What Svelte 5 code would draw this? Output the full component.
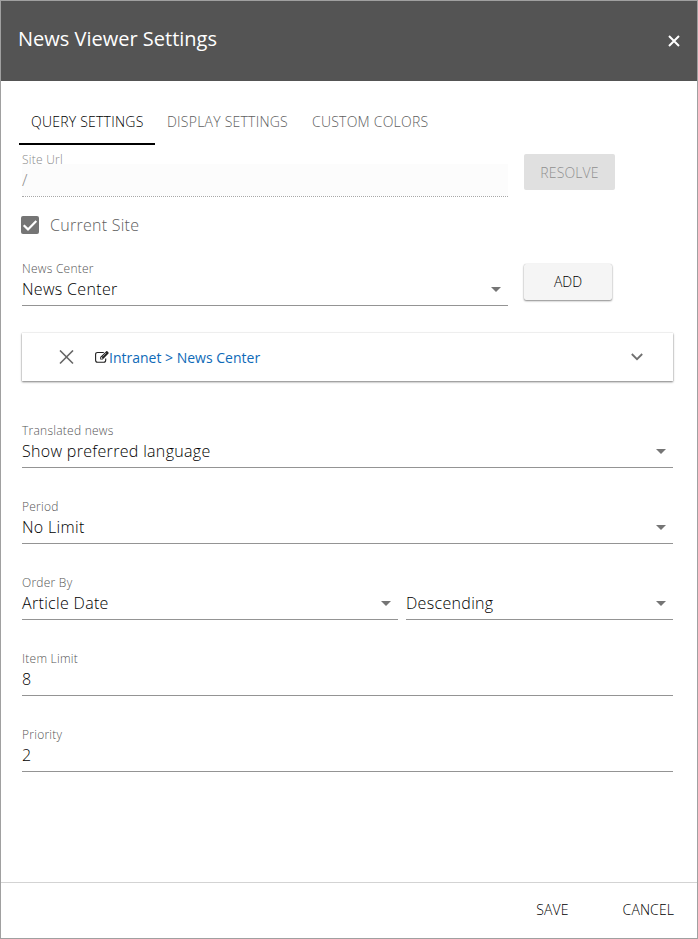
<script>
  const tabs = [
    { label: 'QUERY SETTINGS', width: 112 },
    { label: 'DISPLAY SETTINGS', width: 121 },
    { label: 'CUSTOM COLORS', width: 116 }
  ];
  let active = $state(0);
  let currentSite = $state(true);
</script>

{#snippet arrow()}
  <svg class="arrow" width="10" height="5" viewBox="0 0 10 5"><path d="M0 0H10L5 5Z" fill="#757575" /></svg>
{/snippet}

{#snippet field(label, value, select)}
  <div class="field">
    <div class="label">{label}</div>
    <div class="value"><span>{value}</span>{#if select}{@render arrow()}{/if}</div>
  </div>
{/snippet}

<div class="dialog">
  <header>
    <h1>News Viewer Settings</h1>
    <button class="close" aria-label="Close">
      <svg width="12" height="12" viewBox="0 0 12 12"><path d="M1 1L11 11M11 1L1 11" stroke="#fff" stroke-width="2" /></svg>
    </button>
  </header>

  <main>
    <nav>
      {#each tabs as tab, i}
        <button class="tab" class:active={active === i} onclick={() => (active = i)}><span style="width: {tab.width}px">{tab.label}</span></button>
      {/each}
    </nav>

    <div class="row site">
      <div class="field disabled">
        <div class="label">Site Url</div>
        <div class="value">/</div>
      </div>
      <button class="btn resolve" disabled>RESOLVE</button>
    </div>

    <button class="check" role="checkbox" aria-checked={currentSite} onclick={() => (currentSite = !currentSite)}>
      <svg width="18" height="18" viewBox="0 0 18 18">
        <rect width="18" height="18" rx="2" fill="#757575" />
        {#if currentSite}<path d="M2.7 9.2L7 13.4L15.3 5" fill="none" stroke="#fff" stroke-width="2.2" />{/if}
      </svg>
      <span>Current Site</span>
    </button>

    <div class="row center">
      {@render field('News Center', 'News Center', true)}
      <button class="btn add">ADD</button>
    </div>

    <section class="card">
      <svg class="remove" width="15" height="15" viewBox="0 0 15 15"><path d="M1 .5L14 13.5M14 .5L1 13.5" stroke="#666" stroke-width="1.6" /></svg>
      <svg class="edit" width="14" height="12" viewBox="0 0 14 12">
        <path d="M8.8 1.5H2.6Q.6 1.5 .6 3.5V9.3Q.6 11.3 2.6 11.3H8.7Q10.7 11.3 10.7 9.3V7.5" fill="none" stroke="#222" stroke-width="1.1" />
        <path fill-rule="evenodd" d="M11.3 .3Q11.8-.1 12.3.3L13.5 1.5Q13.9 2 13.5 2.5L7.7 8.5H5.2V6.1ZM6.1 6.6V7.7H7.1L7.6 7.2L6.6 6.1ZM11 1.7L7.4 5.4L7.7 5.7L11.3 2Z" fill="#222" />
      </svg>
      <a href="#news">Intranet &gt; News Center</a>
      <svg class="chevron" width="12" height="8" viewBox="0 0 12 8"><path d="M.8 1L6 6.2L11.2 1" fill="none" stroke="#707070" stroke-width="1.8" /></svg>
    </section>

    <div class="fields">
      {@render field('Translated news', 'Show preferred language', true)}
      {@render field('Period', 'No Limit', true)}
      <div class="row order">
        {@render field('Order By', 'Article Date', true)}
        <div class="direction">{@render field('', 'Descending', true)}</div>
      </div>
      {@render field('Item Limit', '8', false)}
      {@render field('Priority', '2', false)}
    </div>
  </main>

  <footer>
    <button class="save">SAVE</button>
    <button class="cancel">CANCEL</button>
  </footer>
</div>

<style>
  :global(body) { margin: 0; background: #fff; }
  .dialog {
    box-sizing: border-box;
    width: 698px;
    height: 939px;
    border: 1px solid #a0a0a0;
    display: flex;
    flex-direction: column;
    background: #fff;
    color: #000;
    font: 300 16px/24px "Open Sans", sans-serif;
  }
  button {
    font: inherit;
    color: inherit;
    background: none;
    border: 0;
    padding: 0;
    margin: 0;
    white-space: nowrap;
  }
  svg { display: block; flex: none; }
  header {
    height: 80px;
    flex: none;
    box-sizing: border-box;
    padding: 0 17px 4px;
    display: flex;
    align-items: center;
    justify-content: space-between;
    background: #545454;
    color: #fff;
  }
  h1 { margin: 0; font-size: 20px; line-height: 28px; font-weight: 400; }
  .close { padding-top: 4px; }
  main { flex: 1; padding: 18px 24px 0 21px; }
  nav { display: flex; margin-left: -3px; height: 46px; font-size: 14px; }
  .tab {
    padding: 0 12px;
    box-sizing: border-box;
    height: 46px;
    line-height: 46px;
    color: #606060;
    letter-spacing: .23px;
    border-bottom: 2px solid transparent;
    margin-right: -12px;
  }
  .tab + .tab { margin-left: 12px; }
  .tab span { display: block; text-align: left; }
  .tab.active { color: #000; border-color: #000; }
  .row { display: flex; align-items: flex-start; }
  .site { margin-top: 6px; gap: 16px; }
  .center { margin-top: 23px; gap: 16px; }
  .site .field, .center > :global(.field) { width: 486px; }
  .field { height: 46px; box-sizing: border-box; border-bottom: 1px solid #949494; }
  .label { height: 17px; font-size: 12px; line-height: 18px; color: #555; letter-spacing: .25px; }
  .value { height: 24px; line-height: 24px; display: flex; align-items: center; justify-content: space-between; letter-spacing: .32px; }
  .arrow { margin-right: 7px; }
  .disabled {
    border-bottom: 1px dotted #a8a8a8;
    background: linear-gradient(transparent 13px, #fcfcfc 13px);
  }
  .disabled .label, .disabled .value { color: #888; }
  .btn { height: 36px; line-height: 36px; font-size: 14px; border-radius: 2px; text-align: center; }
  .resolve { width: 91px; margin-top: 3px; line-height: 38px; letter-spacing: .15px; background: #e0e0e0; color: #909090; }
  .add {
    width: 88px;
    margin-top: 4px;
    background: #f5f5f5;
    box-shadow: 0 1px 2px rgba(0, 0, 0, .45), 0 0 1px rgba(0, 0, 0, .2);
  }
  .check { display: flex; align-items: center; gap: 11px; height: 24px; margin: 16px 0 0 -1px; color: #606060; letter-spacing: .27px; }
  .card {
    display: flex;
    align-items: center;
    height: 48px;
    margin-top: 27px;
    padding: 0 30px 0 37px;
    box-shadow: 0 1px 2px rgba(0, 0, 0, .5), 0 0 1px rgba(0, 0, 0, .2);
    font-size: 14px;
  }
  .edit { margin-left: 21px; }
  .card a { color: #0e6ab8; text-decoration: none; font-weight: 400; padding-top: 2px; }
  .chevron { margin-left: auto; }
  .fields { margin-top: 41px; display: flex; flex-direction: column; gap: 30px; }
  .order { gap: 8px; }
  .order > .field { width: 376px; }
  .direction { flex: 1; }
  footer {
    box-sizing: border-box;
    height: 56px;
    flex: none;
    border-top: 1px solid #d3d3d3;
    display: flex;
    justify-content: flex-end;
    align-items: center;
    gap: 54px;
    padding: 0 23px 2px 0;
    font-size: 14px;
    letter-spacing: .1px;
  }
  footer button { letter-spacing: .1px; }
</style>
